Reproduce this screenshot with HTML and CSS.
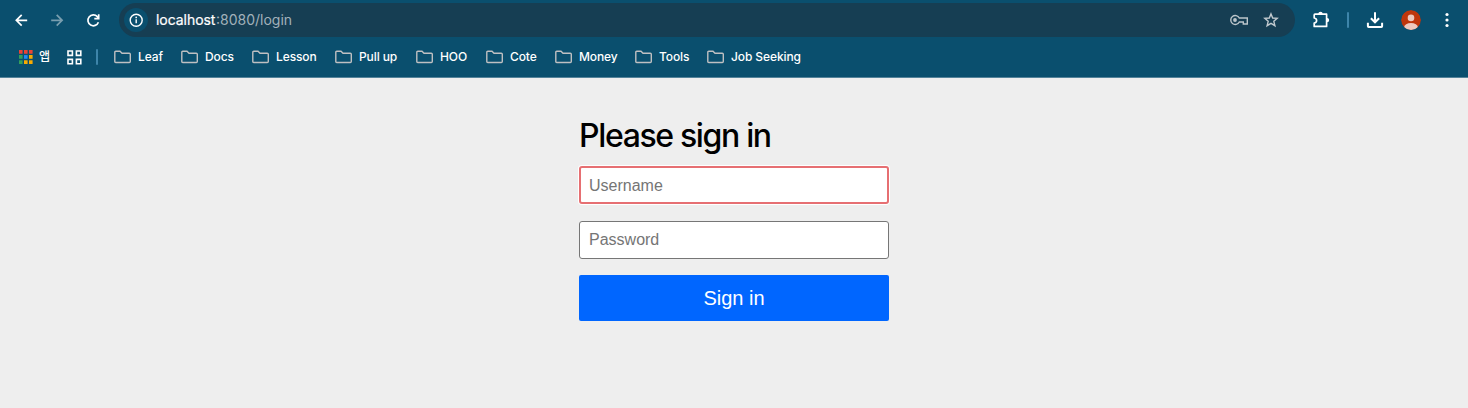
FILE: index.html
```html
<!DOCTYPE html>
<html lang="en">
<head>
<meta charset="utf-8">
<title>Please sign in</title>
<link rel="stylesheet" href="styles.css">
</head>
<body>
<svg width="0" height="0" class="defs"><symbol id="folder" viewBox="0 0 18 14"><path d="M1.8 1.3H6l2 2h7.3c.6 0 1 .4 1 1v7.2c0 .6-.4 1-1 1H1.8c-.6 0-1-.4-1-1V2.3c0-.6.4-1 1-1z" fill="none" stroke="#bfc0c2" stroke-width="1.4"/></symbol></svg>
<header class="browser">
  <div class="toolbar">
    <div class="tool"><svg width="16" height="16" viewBox="0 0 16 16"><path d="M14.2 8.3H3.2M8.7 2.9 3.3 8.3 8.7 13.7" class="line"/></svg></div>
    <div class="tool dim"><svg width="16" height="16" viewBox="0 0 16 16"><path d="M2.2 8.3H13.2M7.7 2.9 13.1 8.3 7.7 13.7" class="line"/></svg></div>
    <div class="tool"><svg width="16" height="16" viewBox="0 0 16 16"><path d="M13.4 10.2A5.4 5.4 0 1 1 12.3 4.7L13.5 6M13.7 2.2V6.6H9.3" class="line"/></svg></div>
    <div class="omnibox">
      <div class="info"><svg width="14" height="14" viewBox="0 0 14 14"><circle cx="7.2" cy="7.2" r="6" fill="none" stroke="#fff" stroke-width="1.4"/><path d="M7.2 6.3V10.2" stroke="#fff" stroke-width="1.4"/><circle cx="7.2" cy="4.4" r=".85" fill="#fff"/></svg></div>
      <div class="url"><span class="host">localhost</span><span class="path">:8080/login</span></div>
      <svg class="key" width="18" height="12" viewBox="0 0 18 12"><path d="M9.3 4H17.3V10H13.3V8H9.3A4.5 4.5 0 1 1 9.3 4z" fill="none" stroke="#bcc5ca" stroke-width="1.4"/><circle cx="5" cy="6" r="1.9" fill="#bcc5ca"/></svg>
      <svg class="star" width="16" height="16" viewBox="0 0 16 16"><path d="M8 1.9 9.7 6 14.2 6.4 10.8 9.3 11.9 13.7 8 11.3 4.1 13.7 5.2 9.3 1.8 6.4 6.3 6z" fill="none" stroke="#c2cacf" stroke-width="1.4"/></svg>
    </div>
    <div class="tool puzzle"><svg width="18" height="18" viewBox="0 0 18 18"><path d="M3 3.2H14.6V15.4H2.2V12.1C5.4 11.6 5.4 7.5 2.2 7V4Q2.2 3.2 3 3.2z" class="line" stroke-linejoin="round"/><path d="M6.3 2.9a2.2 2.2 0 0 1 4.4 0zM15 6.9a2.2 2.2 0 0 1 0 4.4z" fill="#fff"/></svg></div>
    <div class="gap"><i class="divider"></i></div>
    <div class="tool"><svg width="18" height="18" viewBox="0 0 18 18"><path d="M9 1.2V11M4.9 7.2 9 11.3 13.1 7.2M1.9 11.8V15.3Q1.9 16 2.6 16H15.4Q16.1 16 16.1 15.3V11.8" class="heavy"/></svg></div>
    <div class="tool"><svg width="20" height="20" viewBox="0 0 20 20"><clipPath id="face"><circle cx="10" cy="10" r="10"/></clipPath><g clip-path="url(#face)"><circle cx="10" cy="10" r="10" fill="#bf360c"/><circle cx="10" cy="7.9" r="3.3" fill="#efc8bd"/><ellipse cx="10" cy="17" rx="6.8" ry="4" fill="#efc8bd"/></g></svg></div>
    <div class="tool"><svg width="4" height="16" viewBox="0 0 4 16" fill="#fff"><circle cx="2" cy="2.5" r="1.6"/><circle cx="2" cy="8" r="1.6"/><circle cx="2" cy="13.5" r="1.6"/></svg></div>
  </div>
  <nav class="bookmarks">
    <svg class="apps" width="15" height="14" viewBox="0 0 15 14"><path d="M1 0h3.6v3.7H1zM6 0h3.6v3.7H6zM11 0h3.6v3.7H11z" fill="#ea4335"/><path d="M1 5.1h3.6v3.7H1zM1 10.2h3.6v3.7H1z" fill="#34a05a"/><path d="M6 5.1h3.6v3.7H6z" fill="#2389f5"/><path d="M6 10.2h3.6v3.7H6zM11 5.1h3.6v3.7H11zM11 10.2h3.6v3.7H11z" fill="#f9ab00"/></svg>
    <span class="korean">앱</span>
    <svg class="tiles" width="15" height="15" viewBox="0 0 15 15"><path d="M1 1H5.4V5.4H1zM9.4 1H13.8V5.4H9.4zM1 9.4H5.4V13.8H1zM9.4 9.4H13.8V13.8H9.4z" fill="none" stroke="#fff" stroke-width="1.6"/></svg>
    <i class="divider"></i>
    <div class="folders">
      <a><svg><use href="#folder"/></svg>Leaf</a>
      <a><svg><use href="#folder"/></svg>Docs</a>
      <a><svg><use href="#folder"/></svg>Lesson</a>
      <a><svg><use href="#folder"/></svg>Pull up</a>
      <a><svg><use href="#folder"/></svg>HOO</a>
      <a><svg><use href="#folder"/></svg>Cote</a>
      <a><svg><use href="#folder"/></svg>Money</a>
      <a><svg><use href="#folder"/></svg>Tools</a>
      <a><svg><use href="#folder"/></svg>Job Seeking</a>
    </div>
  </nav>
</header>
<main>
  <form class="login">
    <h1>Please sign in</h1>
    <input class="field active" type="text" placeholder="Username">
    <input class="field" type="password" placeholder="Password">
    <button type="button">Sign in</button>
  </form>
</main>
</body>
</html>
```
FILE: styles.css
```css
* { box-sizing: border-box; }
body { margin: 0; height: 408px; overflow: hidden; background: #eee; font-family: Inter, "Noto Sans CJK KR", sans-serif; }
svg { display: block; flex: none; }
.defs { display: none; }
.browser { height: 78px; background: #0a4f6e; border-bottom: 1px solid #54839a; }
.toolbar { height: 40px; padding-left: 3px; display: flex; align-items: center; }
.tool { width: 36px; height: 36px; flex: none; display: flex; align-items: center; justify-content: center; }
.dim { opacity: .45; }
.line { fill: none; stroke: #fff; stroke-width: 1.7; }
.heavy { fill: none; stroke: #fff; stroke-width: 2; }
.omnibox { width: 1176px; height: 34px; margin: 0 0 0 8px; padding: 0 16px 0 5px; border-radius: 17px; background: #163e53; display: flex; align-items: center; }
.info { width: 24px; height: 24px; border-radius: 50%; background: #0a4f6e; display: flex; align-items: center; justify-content: center; }
.url { margin-left: 8px; font-size: 14px; line-height: 20px; color: #a2b1ba; flex: 1; }
.host { color: #fff; display: inline-block; width: 60px; letter-spacing: -.05px; -webkit-text-stroke: .2px #fff; }
.path { letter-spacing: 0; }
.star { margin-left: 15px; }
.puzzle { margin-left: 8px; }
.gap { width: 18px; display: flex; justify-content: center; }
.divider { width: 2px; height: 16px; background: #3e85aa; border-radius: 1px; flex: none; }
.bookmarks { height: 34px; padding-left: 18px; display: flex; align-items: center; color: #fff; font-size: 12px; font-weight: 500; }
.korean { width: 11px; margin: 0 17px 2px 6px; font: 500 12px/16px "Noto Sans CJK KR", sans-serif; }
.bookmarks .divider { margin: 0 16px 0 14px; }
.folders { display: grid; grid-template-columns: 67px 71px 83px 81px 70px 69px 80px 72px 110px; }
.folders a { display: flex; align-items: center; gap: 6px; line-height: 16px; white-space: nowrap; letter-spacing: -.1px; }
.folders svg { width: 18px; height: 14px; }
main { padding-top: 39px; }
.login { width: 310px; margin: 0 auto; }
h1 { margin: 0 0 11px; font-size: 32px; line-height: 38px; font-weight: 500; letter-spacing: -1.35px; color: #000; }
.field { display: block; width: 100%; height: 38px; margin: 0 0 16px; padding: 0 9px; border: 1px solid #767676; border-radius: 3px; background: #fff; font: 16px "Liberation Sans", Arial, sans-serif; outline: none; }
.field::placeholder { color: #757575; }
.field.active { margin-bottom: 17px; border: 2px solid #e66f72; padding: 1px 8px 0; box-shadow: 0 0 0 1px #fff; }
button { display: block; width: 100%; height: 46px; border: 0; border-radius: 2px; background: #06f; color: #fff; font: 20px "Liberation Sans", Arial, sans-serif; }
```
